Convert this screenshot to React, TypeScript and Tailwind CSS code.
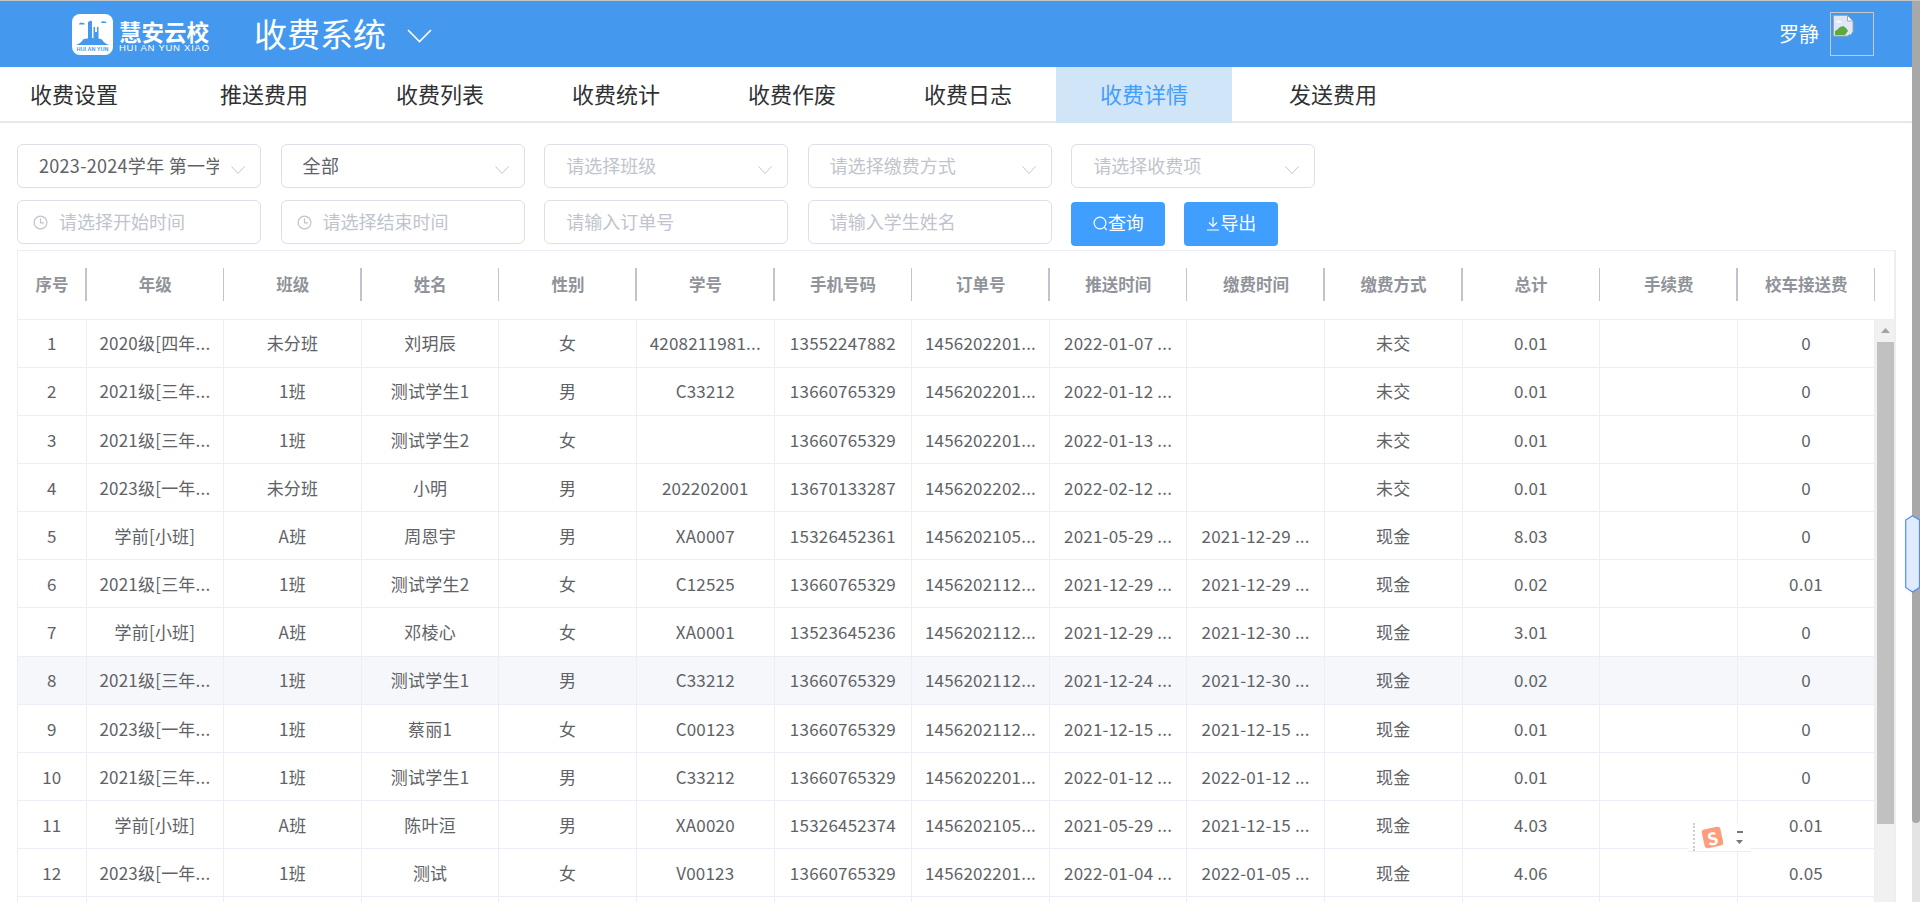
const tabs = ['推送费用', '收费列表', '收费统计', '收费作废', '收费日志']
const heads = ['序号', '年级', '班级', '姓名', '性别', '学号', '手机号码', '订单号', '推送时间', '缴费时间', '缴费方式', '总计', '手续费', '校车接送费']

const G3 = '2021级[三年...'
const G1 = '2023级[一年...'
const XQ = '学前[小班]'
const rows = [
  ['1', '2020级[四年...', '未分班', '刘玥辰', '女', '4208211981...', '13552247882', '1456202201...', '2022-01-07 ...', '', '未交', '0.01', '', '0'],
  ['2', G3, '1班', '测试学生1', '男', 'C33212', '13660765329', '1456202201...', '2022-01-12 ...', '', '未交', '0.01', '', '0'],
  ['3', G3, '1班', '测试学生2', '女', '', '13660765329', '1456202201...', '2022-01-13 ...', '', '未交', '0.01', '', '0'],
  ['4', G1, '未分班', '小明', '男', '202202001', '13670133287', '1456202202...', '2022-02-12 ...', '', '未交', '0.01', '', '0'],
  ['5', XQ, 'A班', '周恩宇', '男', 'XA0007', '15326452361', '1456202105...', '2021-05-29 ...', '2021-12-29 ...', '现金', '8.03', '', '0'],
  ['6', G3, '1班', '测试学生2', '女', 'C12525', '13660765329', '1456202112...', '2021-12-29 ...', '2021-12-29 ...', '现金', '0.02', '', '0.01'],
  ['7', XQ, 'A班', '邓棱心', '女', 'XA0001', '13523645236', '1456202112...', '2021-12-29 ...', '2021-12-30 ...', '现金', '3.01', '', '0'],
  ['8', G3, '1班', '测试学生1', '男', 'C33212', '13660765329', '1456202112...', '2021-12-24 ...', '2021-12-30 ...', '现金', '0.02', '', '0'],
  ['9', G1, '1班', '蔡丽1', '女', 'C00123', '13660765329', '1456202112...', '2021-12-15 ...', '2021-12-15 ...', '现金', '0.01', '', '0'],
  ['10', G3, '1班', '测试学生1', '男', 'C33212', '13660765329', '1456202201...', '2022-01-12 ...', '2022-01-12 ...', '现金', '0.01', '', '0'],
  ['11', XQ, 'A班', '陈叶洹', '男', 'XA0020', '15326452374', '1456202105...', '2021-05-29 ...', '2021-12-15 ...', '现金', '4.03', '', '0.01'],
  ['12', G1, '1班', '测试', '女', 'V00123', '13660765329', '1456202201...', '2022-01-04 ...', '2022-01-05 ...', '现金', '4.06', '', '0.05'],
  ['', '', '', '', '', '', '', '', '', '', '', '', '', ''],
]

function Chevron() {
  return (
    <svg width="14" height="8" viewBox="0 0 14 8" fill="none" stroke="#c0c4cc" strokeWidth="1" className="ml-3 mt-2 shrink-0">
      <path d="M0.5 0.5 7 7.5 13.5 0.5" />
    </svg>
  )
}

function Clock() {
  return (
    <svg width="15" height="15" viewBox="0 0 15 15" fill="none" stroke="#c0c4cc" strokeWidth="1.2" className="shrink-0">
      <circle cx="7.5" cy="7.5" r="6.4" />
      <path d="M7.5 3.6v4.2h3.4" />
    </svg>
  )
}

function Logo() {
  return (
    <svg width="41" height="41" viewBox="0 0 41 41" className="shrink-0">
      <rect width="41" height="41" rx="8" fill="#fff" />
      <path d="M7 10.500a2 2 0 0 1 3.200-1.600 1.800 1.800 0 0 1 2.600 1.600zM29 9a2 2 0 0 1 3.200-1.400 1.800 1.800 0 0 1 2.400 1.400z" fill="#4499ee" />
      <path d="M16 25V8l3-1.500 1 1V25zM21.500 25V13h1.500v5h2v-5h1.500v12z" fill="#4499ee" />
      <path d="M4 31c3-1 6-3 7-5.500 5-2 14-2 19 0 1 2.500 4 4.500 7 5.500z" fill="#4499ee" />
      <text x="20.500" y="37" textAnchor="middle" fontSize="5.500" fontWeight="700" fill="#4499ee" fontFamily="Liberation Sans">HUI AN YUN</text>
    </svg>
  )
}

function BrokenImage() {
  return (
    <svg width="21" height="22" viewBox="0 0 21 22" className="ml-[2px] mt-[2px]">
      <path d="M0.500 0.500h14l5.500 5.500v15h-19.500z" fill="#dfe8f8" stroke="#a6a6a6" />
      <path d="M14.500 0.500v5.500h5.500z" fill="#fff" stroke="#a6a6a6" />
      <path d="M3 7.500c1-2.500 5-2.500 6 0z" fill="#fff" />
      <path d="M2 20v-4c3-1 5-6 9-4.500 2 1 3 3 4 4.500l-3 4z" fill="#5ea83c" />
      <path d="M15 22l1-3 2 1 1-3 2 1v4z" fill="#4499ee" />
    </svg>
  )
}

function SelectBox({ text, placeholder }: { text?: string; placeholder?: string }) {
  return (
    <div className="flex h-[44px] w-[244px] items-center rounded-[6px] border border-[#dcdfe6] pl-[21px] pr-[15px] text-[18px]">
      <span className={text ? 'min-w-0 flex-1 overflow-hidden whitespace-nowrap pb-[2px] tracking-[0.3px] text-[#606266]' : 'min-w-0 flex-1 overflow-hidden whitespace-nowrap pb-[2px] text-[#c0c4cc]'}>
        {text || placeholder}
      </span>
      <Chevron />
    </div>
  )
}

function DateBox({ placeholder }: { placeholder: string }) {
  return (
    <div className="flex h-[44px] w-[244px] items-center gap-[11px] rounded-[6px] border border-[#dcdfe6] pl-[15px] text-[18px] text-[#c0c4cc]">
      <Clock />
      <span className="pb-[2px]">{placeholder}</span>
    </div>
  )
}

function InputBox({ placeholder }: { placeholder: string }) {
  return (
    <div className="flex h-[44px] w-[244px] items-center rounded-[6px] border border-[#dcdfe6] pb-[2px] pl-[21px] text-[18px] text-[#c0c4cc]">
      {placeholder}
    </div>
  )
}

function TableRow({ cells, hover }: { cells: string[]; hover?: boolean }) {
  return (
    <div className={hover ? 'grid h-[48.17px] grid-cols-[68.6px_repeat(13,137.6px)] bg-[#f5f7fa]' : 'grid h-[48.17px] grid-cols-[68.6px_repeat(13,137.6px)]'}>
      {cells.map((c, i) => (
        <div key={i} className="flex items-center justify-center overflow-hidden whitespace-nowrap border-b border-r border-[#ebeef5] text-[17px] tracking-[0.2px] text-[#606266]">
          {c}
        </div>
      ))}
    </div>
  )
}

export default function App() {
  return (
    <div className="relative flex h-[902px] overflow-hidden border-t border-[#c4c4c4] bg-white font-['Noto_Sans_CJK_SC','Noto_Sans',sans-serif]">
      <main className="w-[1912px] shrink-0">
        {/* top bar */}
        <header className="flex h-[66px] items-center bg-[#4499ee] pl-[72px] pr-[38px] text-white">
          <Logo />
          <div className="ml-[6px] mt-[3px] flex w-[92px] flex-col">
            <span className="whitespace-nowrap text-[22.5px] font-bold leading-[23px]">慧安云校</span>
            <span className="whitespace-nowrap font-['Liberation_Sans',sans-serif] text-[9.5px] leading-[9px] tracking-[0.75px]">HUI AN YUN XIAO</span>
          </div>
          <span className="ml-[43px] text-[33px]">收费系统</span>
          <svg width="25" height="14" viewBox="0 0 25 14" fill="none" stroke="#fff" strokeWidth="1.6" className="ml-[21px] mt-[3px]">
            <path d="M1 1l11.500 11.500L24 1" />
          </svg>
          <span className="ml-auto text-[20px]">罗静</span>
          <div className="ml-[11px] h-[44px] w-[44px] border border-[#c8c8c8]">
            <BrokenImage />
          </div>
        </header>

        {/* tabs */}
        <nav className="flex h-[56px] border-b-2 border-[#e4e7ed] text-[22px] text-[#303133]">
          <div className="flex h-[54px] w-[176px] items-center pb-[1px] pl-[30px]">收费设置</div>
          {tabs.map((t) => (
            <div key={t} className="flex h-[54px] w-[176px] items-center justify-center pb-[1px]">{t}</div>
          ))}
          <div className="flex h-[56px] w-[176px] items-center justify-center bg-[#d0e5f8] pb-[3px] text-[#409eff]">收费详情</div>
          <div className="ml-[13px] flex h-[54px] w-[176px] items-center justify-center pb-[1px]">发送费用</div>
        </nav>

        {/* filters */}
        <div className="flex flex-col gap-[12px] px-[17px] pt-[21px]">
          <div className="flex gap-[19.6px]">
            <SelectBox text="2023-2024学年 第一学期" />
            <SelectBox text="全部" />
            <SelectBox placeholder="请选择班级" />
            <SelectBox placeholder="请选择缴费方式" />
            <SelectBox placeholder="请选择收费项" />
          </div>
          <div className="flex h-[46px] gap-[19.6px]">
            <DateBox placeholder="请选择开始时间" />
            <DateBox placeholder="请选择结束时间" />
            <InputBox placeholder="请输入订单号" />
            <InputBox placeholder="请输入学生姓名" />
            <div className="mt-[2px] flex gap-[19px]">
              <button className="flex h-[44px] w-[94px] items-center justify-center rounded-[4px] bg-[#409eff] pb-[3px] text-[18px] text-white">
                <svg width="15" height="15" viewBox="0 0 15 15" fill="none" stroke="#fff" strokeWidth="1.2" className="mt-[1px]">
                  <circle cx="7" cy="7" r="5.900" />
                  <path d="M11 11.200l2.800 2.800" />
                </svg>
                查询
              </button>
              <button className="flex h-[44px] w-[94px] items-center justify-center rounded-[4px] bg-[#409eff] pb-[3px] text-[18px] text-white">
                <svg width="14" height="15" viewBox="0 0 14 15" fill="none" stroke="#fff" strokeWidth="1.2" className="mt-[1px]">
                  <path d="M7 1v9M3 6.500l4 4 4-4M1 14h12" />
                </svg>
                导出
              </button>
            </div>
          </div>
        </div>

        {/* table */}
        <section className="ml-[17px] mt-[4px] w-[1878.500px] border-l border-r-2 border-t border-[#ebeef5]">
          <div className="grid h-[68.500px] grid-cols-[68.600px_repeat(13,137.600px)] border-b border-[#ebeef5]">
            {heads.map((h) => (
              <div key={h} className="flex items-center">
                <span className="flex-1 pl-[1px] text-center text-[16.500px] font-bold text-[#909399]">{h}</span>
                <span className="h-[33px] w-[1.500px] bg-[#c0c4cc]" />
              </div>
            ))}
          </div>
          <div className="flex">
            <div className="w-[1857.400px] shrink-0">
              {rows.map((r, i) => (
                <TableRow key={i} cells={r} hover={i === 7} />
              ))}
            </div>
            {/* inner scrollbar */}
            <div className="flex h-[640px] flex-1 flex-col bg-[#f1f1f1] pl-[2px]">
              <div className="flex h-[22px] items-center justify-center pr-[1px]">
                <svg width="9" height="5" viewBox="0 0 9 5"><path d="M4.500 0L9 5H0z" fill="#a3a3a3" /></svg>
              </div>
              <div className="h-[482px] w-[17px] bg-[#c1c1c1]" />
            </div>
          </div>
        </section>
      </main>

      {/* page scrollbar */}
      <div className="w-[8px] shrink-0 bg-[#e4e4e4]">
        <div className="h-[822px] rounded-b-[4px] bg-[#a8a8a8]" />
      </div>

      {/* side handle from a browser extension */}
      <svg width="15" height="78" viewBox="0 0 15 78" className="absolute left-[1905px] top-[514px]">
        <path d="M7.500 0.700L14.500 5V72.500L7.500 77L0.700 72.500V5z" fill="#e1ebff" stroke="#4d8dff" strokeWidth="1.200" />
      </svg>

      {/* input method badge */}
      <div className="absolute left-[1688px] top-[822px] flex h-[29px] w-[63px] items-center border-b border-[#eeeeee] bg-white/80">
        <span className="ml-[5px] h-full border-l-2 border-dotted border-[#cccccc]" />
        <span className="ml-[8px] flex h-[19px] w-[19px] -rotate-12 items-center justify-center rounded-[3px] bg-[#ff9c7c] text-[17px] font-bold leading-none text-white">S</span>
        <span className="ml-[14px] flex flex-col items-center gap-[7px]">
          <span className="h-[2px] w-[6px] bg-[#777777]" />
          <svg width="7" height="4" viewBox="0 0 7 4"><path d="M0 0h7L3.500 4z" fill="#777777" /></svg>
        </span>
      </div>
    </div>
  )
}
